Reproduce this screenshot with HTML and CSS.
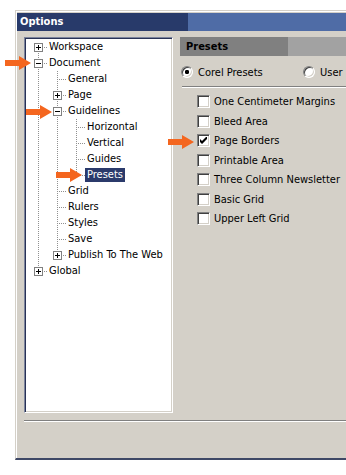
FILE: index.html
```html
<!DOCTYPE html>
<html lang="en">
<head>
    <meta charset="UTF-8">
    <meta name="viewport" content="width=device-width, initial-scale=1.0">
    <title>Options</title>
    <link rel="stylesheet" href="styles.css">
</head>
<body>

    <div class="window">
        <div class="titlebar">Options</div>

        <div class="content">
            <div class="main">
                <!-- tree of option pages -->
                <div class="tree">
                    <div class="node"><span class="cell conn first"><span class="box plus"></span></span><span class="label">Workspace</span></div>
                    <div class="node"><span class="cell conn"><span class="box minus"></span></span><span class="label">Document</span></div>
                    <div class="node"><span class="cell pipe"></span><span class="cell conn"></span><span class="label">General</span></div>
                    <div class="node"><span class="cell pipe"></span><span class="cell conn"><span class="box plus"></span></span><span class="label">Page</span></div>
                    <div class="node"><span class="cell pipe"></span><span class="cell conn"><span class="box minus"></span></span><span class="label">Guidelines</span></div>
                    <div class="node"><span class="cell pipe"></span><span class="cell pipe"></span><span class="cell conn"></span><span class="label">Horizontal</span></div>
                    <div class="node"><span class="cell pipe"></span><span class="cell pipe"></span><span class="cell conn"></span><span class="label">Vertical</span></div>
                    <div class="node"><span class="cell pipe"></span><span class="cell pipe"></span><span class="cell conn"></span><span class="label">Guides</span></div>
                    <div class="node"><span class="cell pipe"></span><span class="cell pipe"></span><span class="cell conn last"></span><span class="label selected">Presets</span></div>
                    <div class="node"><span class="cell pipe"></span><span class="cell conn"></span><span class="label">Grid</span></div>
                    <div class="node"><span class="cell pipe"></span><span class="cell conn"></span><span class="label">Rulers</span></div>
                    <div class="node"><span class="cell pipe"></span><span class="cell conn"></span><span class="label">Styles</span></div>
                    <div class="node"><span class="cell pipe"></span><span class="cell conn"></span><span class="label">Save</span></div>
                    <div class="node"><span class="cell pipe"></span><span class="cell conn last"><span class="box plus"></span></span><span class="label">Publish To The Web</span></div>
                    <div class="node"><span class="cell conn last"><span class="box plus"></span></span><span class="label">Global</span></div>
                </div>

                <!-- presets page -->
                <div class="panel">
                    <div class="panel-head">Presets</div>

                    <div class="radios">
                        <div class="radio-opt corel"><span class="radio checked"></span>Corel Presets</div>
                        <div class="radio-opt"><span class="radio"></span>User Presets</div>
                    </div>

                    <div class="sep"></div>

                    <ul class="checks">
                        <li><span class="check"></span>One Centimeter Margins</li>
                        <li><span class="check"></span>Bleed Area</li>
                        <li><span class="check checked"><svg viewBox="0 0 7 7" width="7" height="7"><polygon points="0,2 2,4 6,0 7,0 7,2 2,7 0,5" fill="#000"/></svg></span>Page Borders</li>
                        <li><span class="check"></span>Printable Area</li>
                        <li><span class="check"></span>Three Column Newsletter</li>
                        <li><span class="check"></span>Basic Grid</li>
                        <li><span class="check"></span>Upper Left Grid</li>
                    </ul>
                </div>
            </div>

            <div class="sep-bottom"></div>
            <div class="button-bar"></div>
        </div>
    </div>

    <!-- callout arrows -->
    <svg class="arrow arrow-document" width="26" height="14" viewBox="0 0 26 14"><polygon points="0,4 14,4 14,0 26,7 14,14 14,10 0,10"/></svg>
    <svg class="arrow arrow-guidelines" width="26" height="14" viewBox="0 0 26 14"><polygon points="0,4 14,4 14,0 26,7 14,14 14,10 0,10"/></svg>
    <svg class="arrow arrow-presets" width="26" height="14" viewBox="0 0 26 14"><polygon points="0,4 14,4 14,0 26,7 14,14 14,10 0,10"/></svg>
    <svg class="arrow arrow-borders" width="26" height="14" viewBox="0 0 26 14"><polygon points="0,4 14,4 14,0 26,7 14,14 14,10 0,10"/></svg>

</body>
</html>
```

FILE: styles.css
```css
html, body {
    margin: 0;
    overflow: hidden;
}

body {
    background-color: #ffffff;
    font-family: "DejaVu Sans Condensed", "DejaVu Sans", sans-serif;
    font-stretch: condensed;
    font-size: 11px;
    color: #000;
}

.window {
    box-sizing: border-box;
    width: 331px;
    margin: 10px 0 0 15px;
    padding: 2px 0 0 1px;
    background-color: #d4d0c8;
    border-top: 1px solid #d4d0c8;
    border-left: 1px solid #d4d0c8;
    border-bottom: 2px solid #3e4866;
    box-shadow: inset 1px 1px #ffffff;
    overflow: hidden;
}

.titlebar {
    height: 18px;
    line-height: 18px;
    padding-left: 3px;
    font-weight: bold;
    font-size: 11px;
    color: #ffffff;
    background: linear-gradient(to right, #283a6a 0, #283a6a 171px, #4f6ca6 171px, #4f6ca6 100%);
}

.content {
    padding: 6px 0 0 7px;
}

.main {
    display: flex;
    align-items: flex-start;
    gap: 7px;
}

/* ---- tree ---- */

.tree {
    box-sizing: border-box;
    flex: 0 0 149px;
    height: 376px;
    padding: 1px 0 0 5px;
    background-color: #ffffff;
    border-top: 1px solid #7c849c;
    border-left: 1px solid #7c849c;
    border-right: 1px solid #ffffff;
    border-bottom: 1px solid #ffffff;
    box-shadow: inset 1px 1px #283256, inset -1px -1px #d4d0c8;
}

.node {
    display: flex;
    height: 16px;
}

.cell {
    flex: 0 0 19px;
    height: 16px;
    background-repeat: no-repeat;
}

.pipe {
    background-image: repeating-linear-gradient(to bottom, #909090 0 1px, transparent 1px 2px);
    background-size: 1px 16px;
    background-position: 8px 0;
}

.conn {
    background-image:
        repeating-linear-gradient(to right, #909090 0 1px, transparent 1px 2px),
        repeating-linear-gradient(to bottom, #909090 0 1px, transparent 1px 2px);
    background-size: 10px 1px, 1px 16px;
    background-position: 8px 8px, 8px 0;
}

.conn.last {
    background-size: 10px 1px, 1px 8px;
}

.conn.first {
    background-size: 10px 1px, 1px 8px;
    background-position: 8px 8px, 8px 8px;
}

.box {
    display: block;
    box-sizing: border-box;
    width: 9px;
    height: 9px;
    margin: 4px 0 0 4px;
    border: 1px solid #808080;
    background-color: #ffffff;
    background-repeat: no-repeat;
}

.box.minus {
    background-image: linear-gradient(#000, #000);
    background-size: 5px 1px;
    background-position: 1px 3px;
}

.box.plus {
    background-image: linear-gradient(#000, #000), linear-gradient(#000, #000);
    background-size: 5px 1px, 1px 5px;
    background-position: 1px 3px, 3px 1px;
}

.label {
    height: 14px;
    line-height: 14px;
    margin-top: 1px;
    padding: 0 2px;
    margin-left: -2px;
    white-space: nowrap;
}

.label.selected {
    background-color: #2b3a6b;
    color: #ffffff;
}

/* ---- presets panel ---- */

.panel {
    flex: 1;
    min-width: 0;
}

.panel-head {
    height: 19px;
    line-height: 19px;
    padding-left: 6px;
    font-weight: bold;
    font-size: 11px;
    background: linear-gradient(to right, #808080 0, #808080 108px, #a2a2a2 108px, #a2a2a2 100%);
}

.radios {
    display: flex;
    align-items: center;
    height: 14px;
    margin-top: 9px;
    padding-left: 1px;
    white-space: nowrap;
}

.radio-opt {
    display: flex;
    align-items: center;
    gap: 5px;
}

.radio-opt.corel {
    flex: 0 0 122px;
}

.radio {
    box-sizing: border-box;
    width: 12px;
    height: 12px;
    border-radius: 50%;
    border: 1px solid;
    border-color: #808080 #ffffff #ffffff #808080;
    background-color: #ffffff;
    box-shadow: inset 1px 1px #404040, inset -1px -1px #d4d0c8;
}

.radio.checked {
    background-image: radial-gradient(circle, #000 0 2px, transparent 2.3px);
}

.sep {
    height: 0;
    margin: 7px 0 0 2px;
    border-top: 1px solid #808080;
    border-bottom: 1px solid #ffffff;
}

.checks {
    list-style: none;
    margin: 3.75px 0 0;
    padding: 0 0 0 17px;
}

.checks li {
    display: flex;
    align-items: center;
    gap: 4px;
    height: 19.5px;
    white-space: nowrap;
}

.check {
    box-sizing: border-box;
    flex: 0 0 13px;
    height: 13px;
    display: flex;
    align-items: center;
    justify-content: center;
    border: 1px solid;
    border-color: #808080 #ffffff #ffffff #808080;
    background-color: #ffffff;
    box-shadow: inset 1px 1px #404040, inset -1px -1px #d4d0c8;
}

.check svg {
    display: block;
}

/* ---- bottom ---- */

.sep-bottom {
    height: 0;
    margin-top: 7px;
    border-top: 1px solid #808080;
    border-bottom: 1px solid #ffffff;
}

.button-bar {
    height: 36px;
}

/* ---- callouts ---- */

.arrow {
    position: absolute;
    fill: #f4661f;
}

.arrow-document {
    left: 5px;
    top: 56px;
}

.arrow-guidelines {
    left: 26px;
    top: 105px;
}

.arrow-presets {
    left: 56px;
    top: 168px;
}

.arrow-borders {
    left: 168px;
    top: 135px;
}
```
